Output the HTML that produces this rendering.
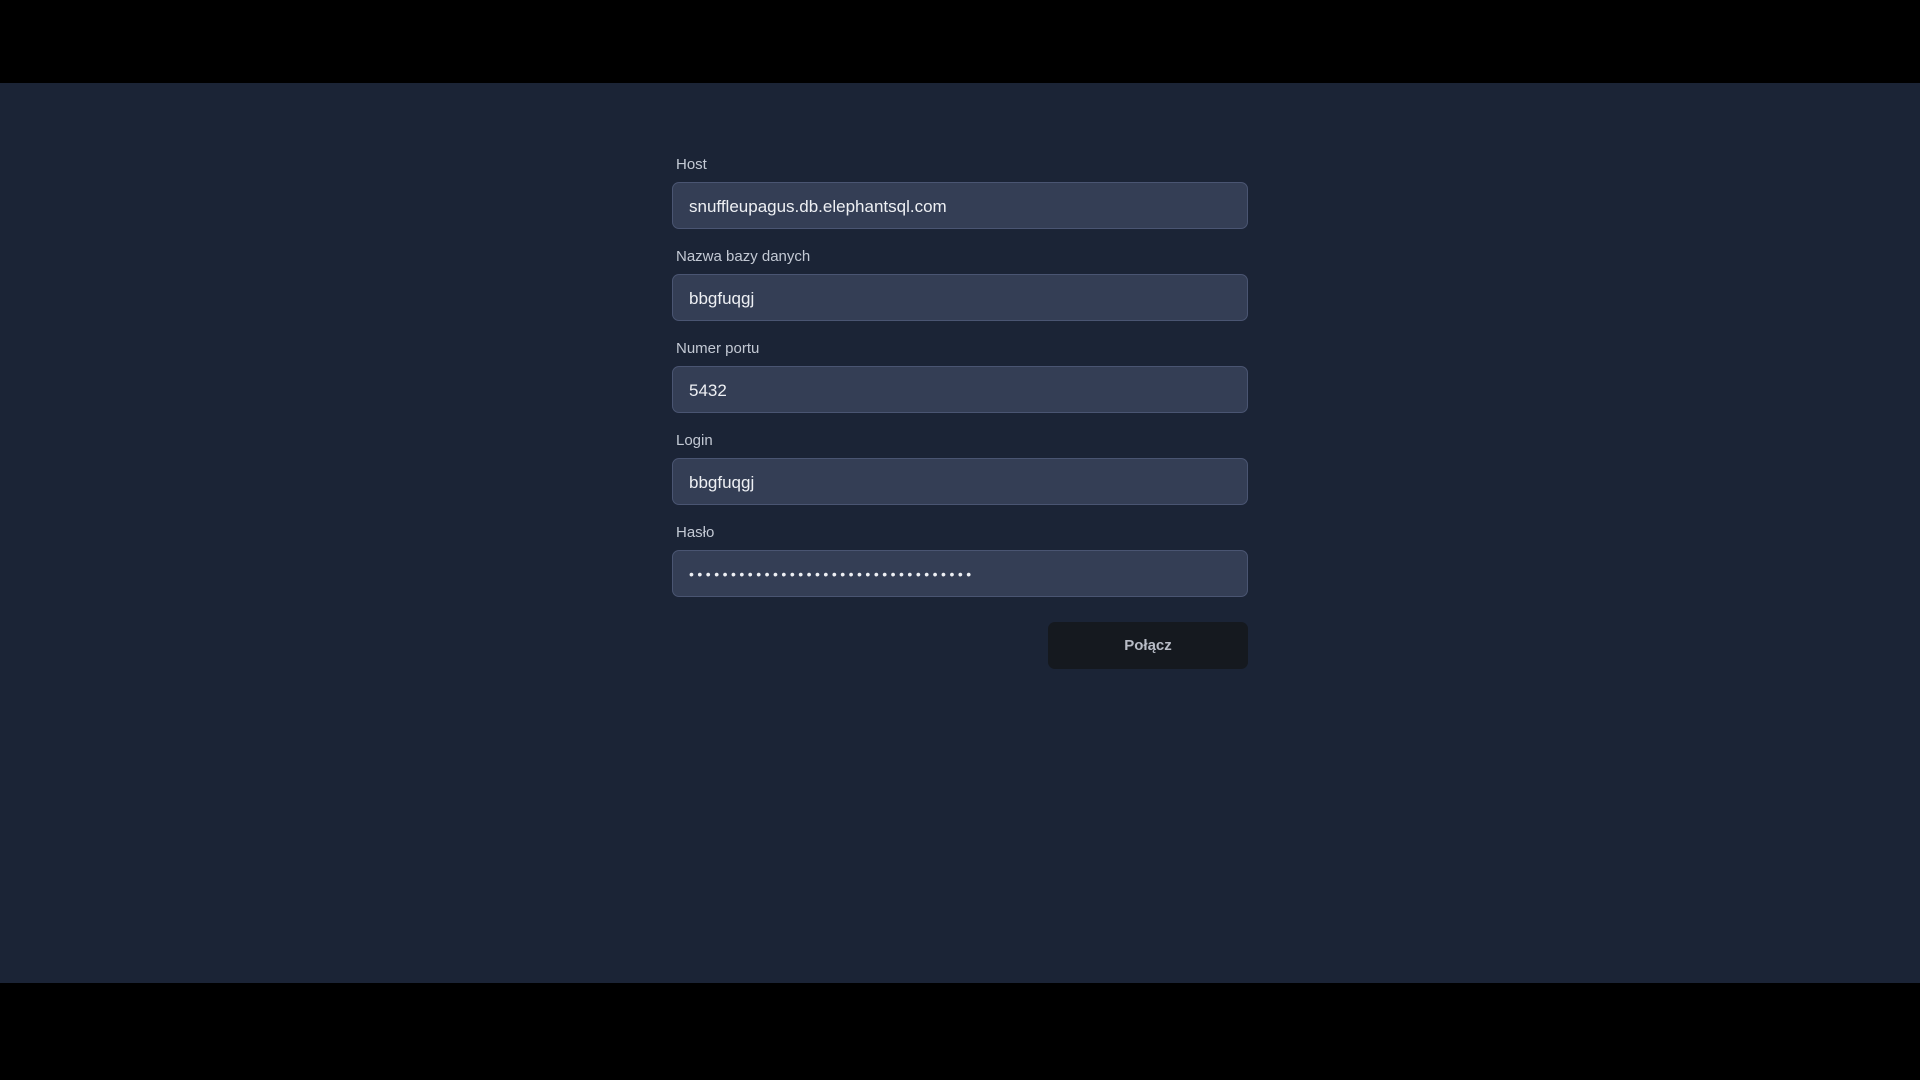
<!DOCTYPE html>
<html><head><meta charset="utf-8"><style>
html,body{margin:0;padding:0;width:1920px;height:1080px;background:#000;overflow:hidden;font-family:"Liberation Sans",sans-serif}
.main{position:absolute;left:0;top:83px;width:1920px;height:900px;background:#1b2436}
.lbl{position:absolute;left:676px;color:#c3c9d4;font-size:15px}
.inp{position:absolute;left:672px;width:558px;height:45px;background:#343e55;border:1px solid #4a5572;border-radius:7px;color:#eef0f4;font-size:17px;line-height:47px;padding-left:16px;box-sizing:content-box}
.btn{position:absolute;left:1048px;top:622px;width:200px;height:47px;background:#15191f;border-radius:7px;color:#b8bcc6;font-size:15px;font-weight:bold;text-align:center;line-height:47px}
</style></head><body>
<div class="main"></div>
<div class="lbl" style="top:156px">Host</div>
<div class="inp" style="top:182px">snuffleupagus.db.elephantsql.com</div>
<div class="lbl" style="top:248px">Nazwa bazy danych</div>
<div class="inp" style="top:274px">bbgfuqgj</div>
<div class="lbl" style="top:340px">Numer portu</div>
<div class="inp" style="top:366px">5432</div>
<div class="lbl" style="top:432px">Login</div>
<div class="inp" style="top:458px">bbgfuqgj</div>
<div class="lbl" style="top:524px">Hasło</div>
<div class="inp" style="top:550px;letter-spacing:3.5px;font-size:14px">••••••••••••••••••••••••••••••••••</div>
<div class="btn">Połącz</div>
</body></html>
